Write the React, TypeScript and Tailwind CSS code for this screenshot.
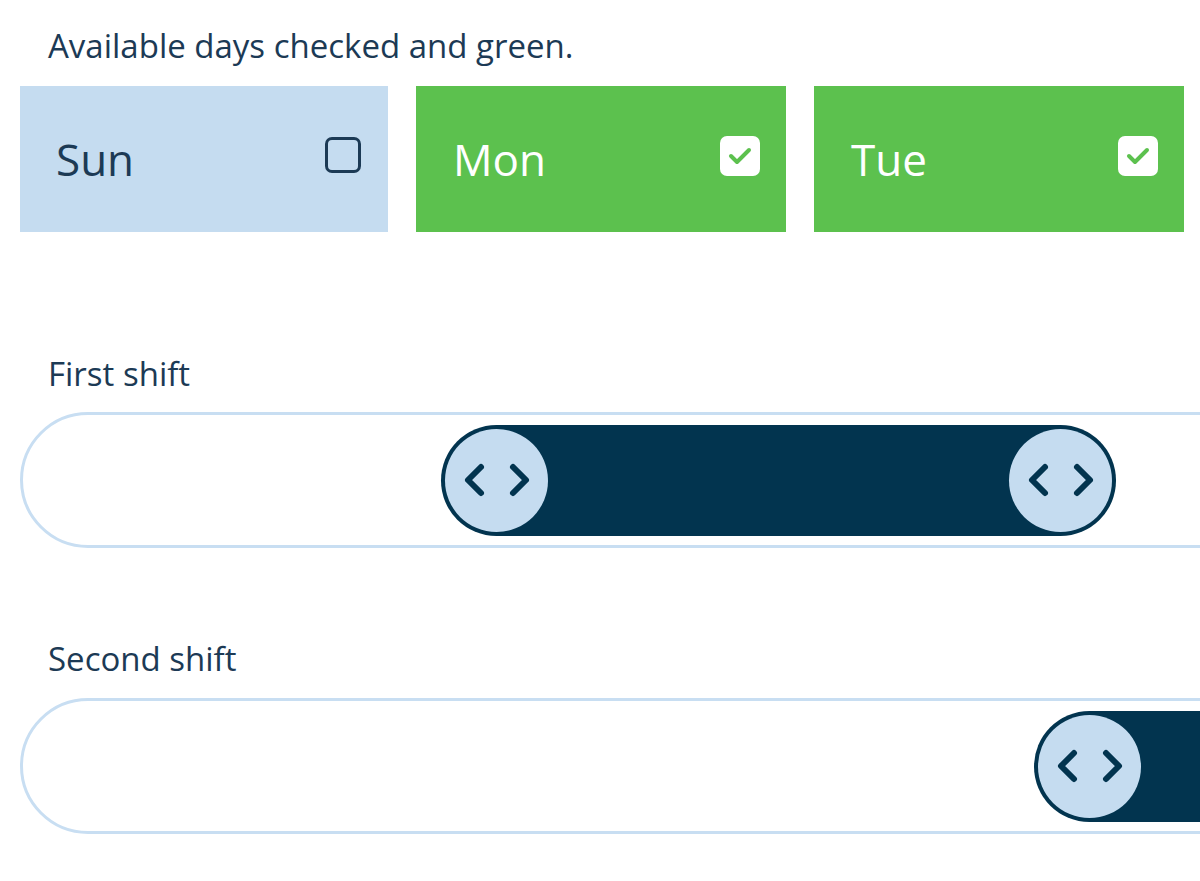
const navy = "#02344f";

function Chevrons() {
  return (
    <svg width="76" height="36" viewBox="0 0 76 36" fill="none">
      <polyline points="22,5 9,18 22,31" stroke={navy} strokeWidth="6" strokeLinecap="round" strokeLinejoin="round" />
      <polyline points="54,5 67,18 54,31" stroke={navy} strokeWidth="6" strokeLinecap="round" strokeLinejoin="round" />
    </svg>
  );
}

function Handle() {
  return (
    <div className="w-[103px] h-[103px] shrink-0 rounded-full bg-[#c5dcf0] flex items-center justify-center">
      <Chevrons />
    </div>
  );
}

function DayCard({ day, checked }: { day: string; checked: boolean }) {
  return (
    <div
      className={
        checked
          ? "w-[370px] h-[146px] shrink-0 bg-[#5cc14e] flex items-center justify-between pl-[37px] pr-[26px]"
          : "w-[368px] h-[146px] shrink-0 bg-[#c5dcf0] flex items-center justify-between pl-[36px] pr-[27px]"
      }
    >
      <span className={checked ? "text-[44px] text-white" : "text-[44px] text-[#1c3a55]"}>{day}</span>
      {checked ? (
        <div className="w-[40px] h-[40px] rounded-[7px] bg-white flex items-center justify-center mb-[6px]">
          <svg width="28" height="22" viewBox="0 0 28 22" fill="none">
            <polyline points="5,11 11,17 23,5" stroke="#5cc14e" strokeWidth="4" strokeLinecap="round" strokeLinejoin="round" />
          </svg>
        </div>
      ) : (
        <div className="w-[36px] h-[36px] rounded-[7px] border-[3px] border-[#1c3a55] mb-[8px]" />
      )}
    </div>
  );
}

export default function App() {
  return (
    <div className="w-[1200px] h-[881px] overflow-hidden bg-white font-['Open_Sans',sans-serif] text-[#1c3a55]">
      <div className="pt-[26px] pl-[48px] text-[33px] leading-[40px]">Available days checked and green.</div>
      <div className="flex gap-[28px] pl-[20px] mt-[20px]">
        <DayCard day="Sun" checked={false} />
        <DayCard day="Mon" checked={true} />
        <DayCard day="Tue" checked={true} />
      </div>

      <div className="pl-[48px] mt-[122px] text-[33px] leading-[40px]">First shift</div>
      <div className="ml-[20px] mt-[18px] w-[1400px] h-[136px] rounded-full border-[3px] border-[#c8def2] flex items-center">
        <div className="ml-[418px] w-[675px] h-[111px] rounded-full bg-[#02344f] flex items-center justify-between px-[4px]">
          <Handle />
          <Handle />
        </div>
      </div>

      <div className="pl-[48px] mt-[91px] text-[33px] leading-[40px]">Second shift</div>
      <div className="ml-[20px] mt-[19px] w-[1400px] h-[136px] rounded-full border-[3px] border-[#c8def2] flex items-center">
        <div className="ml-[1011px] w-[400px] h-[111px] rounded-full bg-[#02344f] flex items-center px-[4px]">
          <Handle />
        </div>
      </div>
    </div>
  );
}
